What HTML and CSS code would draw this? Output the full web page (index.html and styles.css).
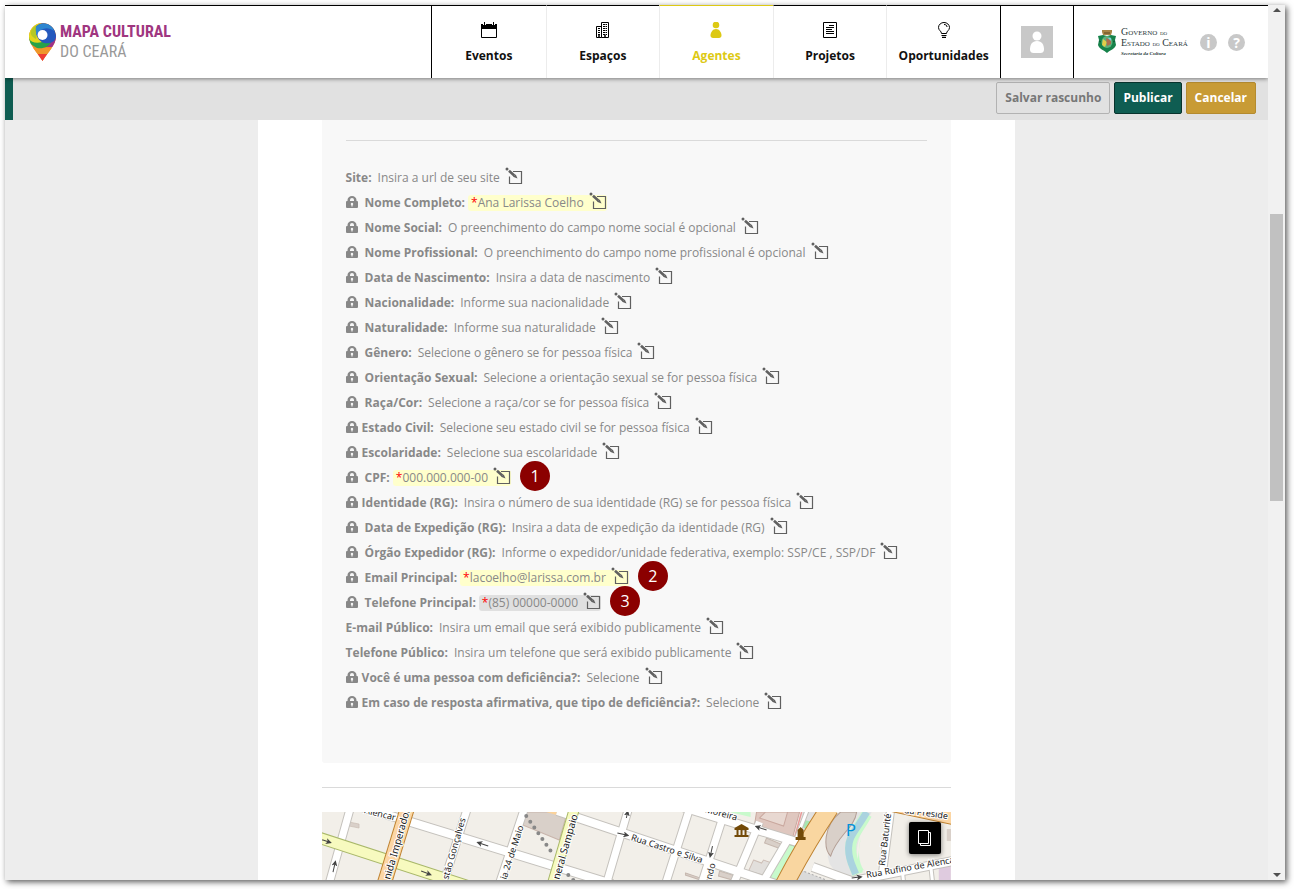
FILE: index.html
```html
<!DOCTYPE html>
<html lang="pt-BR">
<head>
<meta charset="utf-8">
<title>Mapa Cultural do Ceará</title>
<link rel="stylesheet" href="styles.css">
</head>
<body>
<svg class="sprite" aria-hidden="true">
  <symbol id="lock" viewBox="0 0 12 13"><path fill-rule="evenodd" d="M1.500 5V4a4.500 4 0 0 1 9 0v1h.5a1 1 0 0 1 1 1v5a1 1 0 0 1-1 1H1a1 1 0 0 1-1-1V6a1 1 0 0 1 1-1zM4 5h4V4a2 2 0 0 0-4 0zM6 6.800a1.300 1.300 0 0 0-.6 2.400V10.500h1.200V9.200A1.300 1.300 0 0 0 6 6.800z"/></symbol>
  <symbol id="edit" viewBox="0 0 18 18"><path d="M8 4.500h8.500v12h-12V9.500" fill="none" stroke="currentColor" stroke-width="1.200"/><path d="M4 3.800l5.500 5" stroke="currentColor" stroke-width="2.600"/><path d="M8 9.800l2.800-2.300 1.700 4z" fill="currentColor"/><circle cx="2" cy="2" r="1.500"/></symbol>
</svg>
<div class="window">
  <div class="page">
    <header class="topbar">
      <a class="brand" href="#">
        <svg width="27" height="38" viewBox="0 0 27 38" aria-hidden="true">
          <clipPath id="pin"><path d="M13.500 0A13.500 13.500 0 0 1 27 13.500C27 22 19 29 13.500 38 8 29 0 22 0 13.500A13.500 13.500 0 0 1 13.500 0z"/></clipPath>
          <g clip-path="url(#pin)">
            <rect width="27" height="38" fill="#ee8a26"/>
            <path d="M0 31h27v7H0z" fill="#ee3c32"/>
            <path d="M3 25h21l-3 6H7z" fill="#ef9629"/>
            <path d="M27 11v13H14l5-5z" fill="#a03289"/>
            <path d="M0 12c4 8 13 8 23 5-2 7-9 9-15 8L0 20z" fill="#25a24a"/>
            <path d="M0 16V0h12C5 6 6 13 13 19 7 21 2 19 0 16z" fill="#e4d51c"/>
            <path d="M2 8C6 0 14 0 21 4L9 7 7 16C3 14 1 11 2 8z" fill="#b5c825"/>
            <path d="M7 4C10-2 27-2 27 13c0 6-6 8-12 7-6-2-9-9-8-16z" fill="#2458bd"/>
            <path d="M7 4c5-6 16-4 18 4-6-4-12-4-18 4z" fill="#2e86d0"/>
          </g>
          <circle cx="13.500" cy="12" r="5" fill="#fff"/>
        </svg>
        <span class="brand-name"><b>MAPA CULTURAL</b><span>DO CEARÁ</span></span>
      </a>
      <nav class="nav">
        <a href="#"><svg width="16" height="16" viewBox="0 0 16 16"><path d="M.5 3.500h15v12H.5z" fill="none" stroke="#000"/><path d="M0 2h2v2h3V2h6v2h3V2h2v5H0z"/><path d="M3.500 0v3.500M12.500 0v3.500" stroke="#000"/></svg>Eventos</a>
        <a href="#"><svg width="16" height="16" viewBox="0 0 16 16" fill="none" stroke="#000"><path d="M1.500 15.500v-11h5M6.500 15.500V.5h7v15zM1.500 15.500h5"/><path d="M3 6.500h2.500M3 8.500h2.500M3 10.500h2.500M8 2.500h4M8 4.500h4M8 6.500h4M8 8.500h4M8 10.500h4M8 12.500h4M3 12.500h2.500" stroke-dasharray="2 .5"/><path d="M4 13v2.500M10 13v2.500" stroke-width="1.500"/></svg>Espaços</a>
        <a class="active" href="#"><svg width="16" height="16" viewBox="0 0 16 16" fill="#ddc914"><circle cx="8" cy="3" r="3.300"/><path d="M8 7c3.500 0 5.500 3.500 5.500 6.500 0 1.500-1 2.500-2.500 2.500H5c-1.500 0-2.500-1-2.500-2.500C2.500 10.500 4.500 7 8 7z"/></svg>Agentes</a>
        <a href="#"><svg width="16" height="16" viewBox="0 0 16 16" fill="none" stroke="#000"><path d="M1.500.5h13v15h-13z"/><path d="M7 3.500h5M4 5.500h8M4 7.500h6M4 9.500h8M4 11.500h8"/></svg>Projetos</a>
        <a href="#"><svg width="16" height="16" viewBox="0 0 16 16" fill="none" stroke="#000"><path d="M5.500 11.500C5.500 9 2.500 8.500 2.500 5.500a5.500 5 0 0 1 11 0c0 3-3 3.500-3 6zM5.500 13.500h5M8 2.500c2 0 3 1 3 2.500"/><path d="M6 15.500h4" stroke-width="1.500"/></svg>Oportunidades</a>
      </nav>
      <a class="user" href="#" aria-label="Meu perfil"><svg width="32" height="32" viewBox="0 0 32 32"><path fill="#c8c8c8" d="M0 0h32v32H0z"/><circle cx="16" cy="10" r="4.500" fill="#fff"/><path d="M16 15c5 0 7 4 7 8.500 0 2.500-1.500 3.500-3.500 3.500h-7C10.500 27 9 26 9 23.500 9 19 11 15 16 15z" fill="#fff"/></svg></a>
      <div class="gov">
        <a class="gov-link" href="#">
          <svg width="18" height="24" viewBox="0 0 18 24" aria-hidden="true"><path d="M4 0h10v2l-1 3H5L4 2z" fill="#a98545"/><path d="M6 3h6" stroke="#5d4724"/><path d="M0 6l5-1 4 1 4-1 5 1-1 4 1 5c-1 4-6 5-9 8-3-3-8-4-9-8l1-5z" fill="#16824a"/><ellipse cx="9" cy="12" rx="5.500" ry="6" fill="#5eb17c"/><path d="M5 9l4 3-2 5-3-2z" fill="#e1ce49"/><path d="M8 8l5 2v4l-4 2z" fill="#ad6e4f"/><path d="M10 8h3v3z" fill="#7bcfe4"/><path d="M1 11l2 1M15 12l2-1" stroke="#0b5635"/></svg>
          <span class="gov-text"><span>Governo <small>do</small></span><span>Estado <small>do</small> Ceará</span><i>Secretaria da Cultura</i></span>
        </a>
        <a class="round" href="#">i</a>
        <a class="round" href="#">?</a>
      </div>
    </header>
    <div class="actions">
      <button class="btn draft" type="button">Salvar rascunho</button>
      <button class="btn publish" type="button">Publicar</button>
      <button class="btn cancel" type="button">Cancelar</button>
    </div>
    <main class="paper">
      <section class="card">
        <hr>
        <ul class="fields">
          <li><b>Site:</b><a href="#">Insira a url de seu site<svg><use href="#edit"/></svg></a></li>
          <li><svg class="lock wide"><use href="#lock"/></svg><b>Nome Completo:</b><a class="required" href="#"><em>*</em>Ana Larissa Coelho<svg><use href="#edit"/></svg></a></li>
          <li><svg class="lock wide"><use href="#lock"/></svg><b>Nome Social:</b><a href="#">O preenchimento do campo nome social é opcional<svg><use href="#edit"/></svg></a></li>
          <li><svg class="lock wide"><use href="#lock"/></svg><b>Nome Profissional:</b><a href="#">O preenchimento do campo nome profissional é opcional<svg><use href="#edit"/></svg></a></li>
          <li><svg class="lock wide"><use href="#lock"/></svg><b>Data de Nascimento:</b><a href="#">Insira a data de nascimento<svg><use href="#edit"/></svg></a></li>
          <li><svg class="lock wide"><use href="#lock"/></svg><b>Nacionalidade:</b><a href="#">Informe sua nacionalidade<svg><use href="#edit"/></svg></a></li>
          <li><svg class="lock wide"><use href="#lock"/></svg><b>Naturalidade:</b><a href="#">Informe sua naturalidade<svg><use href="#edit"/></svg></a></li>
          <li><svg class="lock wide"><use href="#lock"/></svg><b>Gênero:</b><a href="#">Selecione o gênero se for pessoa física<svg><use href="#edit"/></svg></a></li>
          <li><svg class="lock wide"><use href="#lock"/></svg><b>Orientação Sexual:</b><a href="#">Selecione a orientação sexual se for pessoa física<svg><use href="#edit"/></svg></a></li>
          <li><svg class="lock wide"><use href="#lock"/></svg><b>Raça/Cor:</b><a href="#">Selecione a raça/cor se for pessoa física<svg><use href="#edit"/></svg></a></li>
          <li><svg class="lock"><use href="#lock"/></svg><b>Estado Civil:</b><a href="#">Selecione seu estado civil se for pessoa física<svg><use href="#edit"/></svg></a></li>
          <li><svg class="lock"><use href="#lock"/></svg><b>Escolaridade:</b><a href="#">Selecione sua escolaridade<svg><use href="#edit"/></svg></a></li>
          <li><svg class="lock wide"><use href="#lock"/></svg><b>CPF:</b><a class="required" href="#"><em>*</em>000.000.000-00<svg><use href="#edit"/></svg></a><span class="step">1</span></li>
          <li><svg class="lock"><use href="#lock"/></svg><b>Identidade (RG):</b><a href="#">Insira o número de sua identidade (RG) se for pessoa física<svg><use href="#edit"/></svg></a></li>
          <li><svg class="lock wide"><use href="#lock"/></svg><b>Data de Expedição (RG):</b><a href="#">Insira a data de expedição da identidade (RG)<svg><use href="#edit"/></svg></a></li>
          <li><svg class="lock wide"><use href="#lock"/></svg><b>Órgão Expedidor (RG):</b><a href="#">Informe o expedidor/unidade federativa, exemplo: SSP/CE , SSP/DF<svg><use href="#edit"/></svg></a></li>
          <li><svg class="lock wide"><use href="#lock"/></svg><b>Email Principal:</b><a class="required" href="#"><em>*</em>lacoelho@larissa.com.br<svg><use href="#edit"/></svg></a><span class="step">2</span></li>
          <li><svg class="lock wide"><use href="#lock"/></svg><b>Telefone Principal:</b><a class="required hovered" href="#"><em>*</em>(85) 00000-0000<svg><use href="#edit"/></svg></a><span class="step">3</span></li>
          <li><b>E-mail Público:</b><a href="#">Insira um email que será exibido publicamente<svg><use href="#edit"/></svg></a></li>
          <li><b>Telefone Público:</b><a href="#">Insira um telefone que será exibido publicamente<svg><use href="#edit"/></svg></a></li>
          <li><svg class="lock"><use href="#lock"/></svg><b>Você é uma pessoa com deficiência?:</b><a href="#">Selecione<svg><use href="#edit"/></svg></a></li>
          <li><svg class="lock"><use href="#lock"/></svg><b>Em caso de resposta afirmativa, que tipo de deficiência?:</b><a href="#">Selecione<svg><use href="#edit"/></svg></a></li>
        </ul>
      </section>
      <hr class="divider">
      <section class="map">
        <svg class="streets" viewBox="0 0 629 68" preserveAspectRatio="xMinYMin slice" role="img" aria-label="Mapa">
          <defs>
            <marker id="tip" viewBox="0 0 6 6" refX="3" refY="3" markerWidth="6" markerHeight="6" markerUnits="userSpaceOnUse" orient="auto"><path d="M0 0l6 3-6 3 1.500-3z" fill="#444"/></marker>
          </defs>
          <path fill="#f2efe9" d="M0 0h629v68H0z"/>
          <!-- blocks, parks and water -->
          <path d="M201 0h44l-8 28-39-16z" fill="#d9d0c9" stroke="#c8b4ab"/>
          <path d="M224 0h19l-2 5z" fill="#fbd29a"/>
          <path d="M27 10l10 2v4l-10-2z" fill="#d9d0c9" stroke="#c6b8af" stroke-width=".6"/>
          <path d="M407 0h21v5z" fill="#c8facc"/>
          <path d="M434 0h43l-8 29-37-16z" fill="#dfc7bf" stroke="#c9a79e"/>
          <path d="M443 0h22l-4 14-24-8z" fill="#e8d8d1" stroke="#c9a79e"/>
          <path d="M480 0h20l-14 20-10-3z" fill="#e1e1e1"/>
          <path d="M482 8l8 2-6 8-4-3z" fill="#a7e7b3"/>
          <path d="M479 0l-8 29" stroke="#e99b9b" stroke-width="1.500"/>
          <path d="M465 32l10 3-19 33h-16z" fill="#c8facc" stroke="#9dca9e"/>
          <path d="M444 26l14 6-2 4-14-5z" fill="#d9d0c9" stroke="#c6b8af"/>
          <path d="M431 48l8 3 2-3 11 4-4 13-22-6z" fill="#e2dfdc" stroke="#cdbeb6"/>
          <path d="M363 61l15 5v2l-15-5zM397 59l13 4v5l-14-4z" fill="#d9d0c9" stroke="#c6b8af"/>
          <path d="M533 0h16c-10 20-19 30-14 68h-16l-12-16-2-8z" fill="#e4e4e4"/>
          <path d="M518 0h16c-2 16-20 24-26 44-7-7-8-30 10-44z" fill="#d9d0c9" stroke="#b39e94"/>
          <path d="M538 26c-3 14-2 24 3 32l-8 4z" fill="#c8facc"/>
          <path d="M544 2c-10 18-16 22-16 34s4 18 7 26" fill="none" stroke="#c8facc" stroke-width="11"/>
          <path d="M544 0c-10 18-19 24-18 38 0 10 4 16 7 24" fill="none" stroke="#aad3df" stroke-width="7"/>
          <path d="M478 58l36 14h-50z" fill="#dadada" stroke="#aaa" stroke-dasharray="2 2"/>
          <path d="M616 50h12v18h-12z" fill="#dfcbdf"/>
          <path d="M624 17h5v12h-5z" fill="#d9d0c9"/>
          <!-- minor streets: casing, then surface -->
          <g fill="none" stroke="#c5c2bd" stroke-width="9">
            <path d="M28-3L7 72M145-3L121 72M202-3l-25 75M306-3l-22 75M367-3l-24 75M403-3l-24 75M437 10l-26 62M465 28l-26 44M568-3l-8 62"/>
            <path d="M40-5L290 72M235-1l218 73M360-5l124 38M490 55l50 18M525 70l110-22" stroke-width="10"/>
            <path d="M580 62l1 10M608 54l2 18M485-3l-13 34" stroke-width="5"/>
          </g>
          <g fill="none" stroke="#fff" stroke-width="7">
            <path d="M28-3L7 72M145-3L121 72M202-3l-25 75M306-3l-22 75M367-3l-24 75M403-3l-24 75M437 10l-26 62M465 28l-26 44M568-3l-8 62"/>
            <path d="M40-5L290 72M235-1l218 73M360-5l124 38M490 55l50 18M525 70l110-22" stroke-width="8"/>
            <path d="M580 62l1 10M608 54l2 18M485-3l-13 34" stroke-width="3"/>
          </g>
          <!-- main avenues -->
          <g fill="none">
            <path d="M-5 25l160 52" stroke="#a9b86a" stroke-width="12"/><path d="M-5 25l160 52" stroke="#f7fabf" stroke-width="10"/>
            <path d="M252-3l-22 75" stroke="#a9b86a" stroke-width="11"/><path d="M252-3l-22 75" stroke="#f7fabf" stroke-width="9"/>
            <path d="M85-3L62 72" stroke="#bf8331" stroke-width="15"/><path d="M85-3L62 72" stroke="#fcd6a4" stroke-width="13"/>
            <path d="M507-4q-24 36-45 76" stroke="#bf8331" stroke-width="19"/><path d="M507-4q-24 36-45 76" stroke="#f9d6a0" stroke-width="17"/>
            <path d="M560-9l75 16" stroke="#bf8331" stroke-width="14"/><path d="M560-9l75 16" stroke="#fcd6a4" stroke-width="12"/>
            <path d="M204 4l26 37M246 63l6 6" stroke="#888" stroke-width="4" stroke-linecap="round" stroke-dasharray="0 7"/>
          </g>
          <g stroke="#444" fill="none" marker-end="url(#tip)">
            <path d="M0 28h1l6 2"/><path d="M99 59l8 3"/><path d="M11 60l2-9"/><path d="M166 34l-9-3"/><path d="M295 21l9 2"/><path d="M304 6l1-5"/><path d="M390 34l-2 9"/><path d="M444 18l-9-3"/><path d="M529 66l8-1"/>
          </g>
          <g class="street-names">
            <text transform="translate(42 1) rotate(14)">Alencar</text>
            <text transform="translate(68 68) rotate(-74)" font-size="10">nida Imperador</text>
            <text transform="translate(126 68) rotate(-74)">stão Gonçalves</text>
            <text transform="translate(184 68) rotate(-72)">ia 24 de Maio</text>
            <text transform="translate(237 68) rotate(-74)" font-size="10">neral Sampaio</text>
            <text transform="translate(308 28) rotate(18)">Rua Castro e Silva</text>
            <text transform="translate(382 0) rotate(15)">Moreira</text>
            <text transform="translate(389 68) rotate(-76)">ndo</text>
            <text transform="translate(562 54) rotate(-83)">Rua Baturité</text>
            <text transform="translate(544 66) rotate(-10)">Rua Rufino de Alenca</text>
            <text transform="translate(581 1) rotate(8)">da Preside</text>
          </g>
          <path d="M412 16l7-4 7 4v2h-14zM414 18h2v5h-2zM418 18h2v5h-2zM422 18h2v5h-2zM412 23h14v2h-14zM475 18l3-3 3 3v7h2v3h-10v-3h2z" fill="#734a08"/>
          <text class="parking" x="523" y="24">P</text>
        </svg>
        <button class="layers" type="button" aria-label="Camadas"><svg width="16" height="18" viewBox="0 0 16 18" fill="none" stroke="#fff"><path d="M1.500 1.500h10v13h-10zM3.500 14.500v2h10v-13h-2"/></svg></button>
      </section>
    </main>
  </div>
  <div class="scroll" aria-hidden="true"><span class="arrow up"></span><span class="thumb"></span><span class="arrow down"></span></div>
</div>
</body>
</html>
```
FILE: styles.css
```css
* { box-sizing: border-box; }
body { margin: 0; background: #fff; font: 12px/16px "Open Sans", sans-serif; color: #888; }
a { color: inherit; text-decoration: none; }
hr { height: 1px; margin: 0; border: 0; background: #dadada; }
.sprite { position: absolute; width: 0; height: 0; }

.window { display: flex; height: calc(100vh - 14px); margin: 5px 9px 9px 5px; box-shadow: 2px 2px 6px rgba(0, 0, 0, .65); }
.page { flex: 1; min-width: 0; display: flex; flex-direction: column; overflow: hidden; background: #ededed; }

.topbar { z-index: 1; display: flex; flex: none; height: 73px; background: #fff; border-top: 1px solid #000; box-shadow: 0 1px 4px rgba(0, 0, 0, .45); }
.brand { flex: 1; display: flex; align-items: center; gap: 4px; padding-left: 24px; }
.brand-name { display: grid; font: 16px/20px "Roboto Condensed", Roboto, sans-serif; color: #999; }
.brand-name b { color: #a03680; }
.nav { display: flex; width: 570px; border-left: 1px solid #000; border-right: 1px solid #000; }
.nav a { flex: 1 1 114px; min-width: 0; display: flex; flex-direction: column; align-items: center; gap: 10px; margin-top: -1px; padding-top: 16px; border-top: 1px solid #000; border-left: 1px solid #ececec; color: #111; font-weight: 700; }
.nav a:first-child { border-left: 0; }
.nav .active { color: #ddc914; border-top-color: #ddc914; }
.user { display: flex; align-items: center; justify-content: center; width: 72px; }
.gov { display: flex; align-items: center; gap: 11px; width: 195px; padding-left: 24px; border-left: 1px solid #000; }
.gov-link { display: flex; align-items: center; gap: 5px; }
.gov-text { display: grid; width: 68px; white-space: nowrap; font: 10px/9px "Liberation Serif", serif; font-variant: small-caps; color: #2b3a3c; }
.gov-text small { font-size: 7px; }
.gov-text i { font-size: 5px; font-weight: 700; font-variant: normal; }
.round { width: 17px; height: 17px; border-radius: 50%; background: #c8c8c8; color: #fff; font-size: 14px; line-height: 17px; font-weight: 700; text-align: center; }

.actions { display: flex; flex: none; justify-content: flex-end; align-items: flex-start; gap: 4px; height: 42px; padding: 4px 12px; background: #e1e1e1; border-left: 8px solid #0e5c51; }
.btn { height: 32px; padding: 0 8px; border: 1px solid; border-radius: 2px; font: 700 12px/16px "Open Sans", sans-serif; color: #fff; }
.draft { background: #e1e1e1; border-color: #b2b2b2; color: #777; }
.publish { background: #0f5d52; border-color: #08332d; }
.cancel { background: #c89b35; border-color: #b48b2f; }

.paper { flex: 1; min-height: 0; display: flex; flex-direction: column; width: 60%; margin: 0 auto; padding: 0 64px; background: #fff; }
.card { padding: 20px 24px 48px; background: #f8f8f8; border-radius: 0 0 3px 3px; }
.fields { margin: 24px 0 0; padding: 0; list-style: none; }
.fields li { display: flex; align-items: center; height: 25px; white-space: nowrap; }
.fields a { display: flex; align-items: center; margin-left: 3px; padding-left: 3px; border-radius: 3px; }
.fields a svg { width: 18px; height: 18px; margin: -6px 0 -2px 5px; color: #606060; fill: #606060; }
.fields em { color: #f00; font-style: normal; }
.fields .required { background: #ffffcc; }
.fields .hovered { background: #e0e0e0; }
.lock { width: 12px; height: 13px; margin-right: 4px; fill: #888; }
.lock.wide { margin-right: 7px; }
.step { width: 30px; height: 30px; margin: -3px 0 0 9px; border-radius: 50%; background: #8b0000; color: #fff; font-size: 16px; line-height: 30px; text-align: center; }
.divider { flex: none; margin: 24px 0; }

.map { position: relative; flex: 1; min-height: 0; overflow: hidden; }
.streets { display: block; width: 100%; height: 100%; }
.street-names { font: 9px "Noto Sans", sans-serif; fill: #222; stroke: #fff; stroke-width: 2px; paint-order: stroke; }
.parking { font: 17px "Noto Sans", sans-serif; fill: #0092da; }
.layers { position: absolute; top: 10px; right: 10px; display: grid; place-items: center; width: 32px; height: 32px; padding: 0; border: 0; border-radius: 2px; background: #000; box-shadow: 0 1px 5px rgba(0, 0, 0, .5); }

.scroll { display: flex; flex-direction: column; align-items: center; width: 17px; padding: 3px 0; background: #f1f1f1; }
.thumb { width: 13px; height: 33%; margin-top: 202px; margin-bottom: auto; background: #c1c1c1; }
.arrow { border: 4px solid transparent; }
.up { border-top: 0; border-bottom-color: #505050; }
.down { border-bottom: 0; border-top-color: #505050; }
```
